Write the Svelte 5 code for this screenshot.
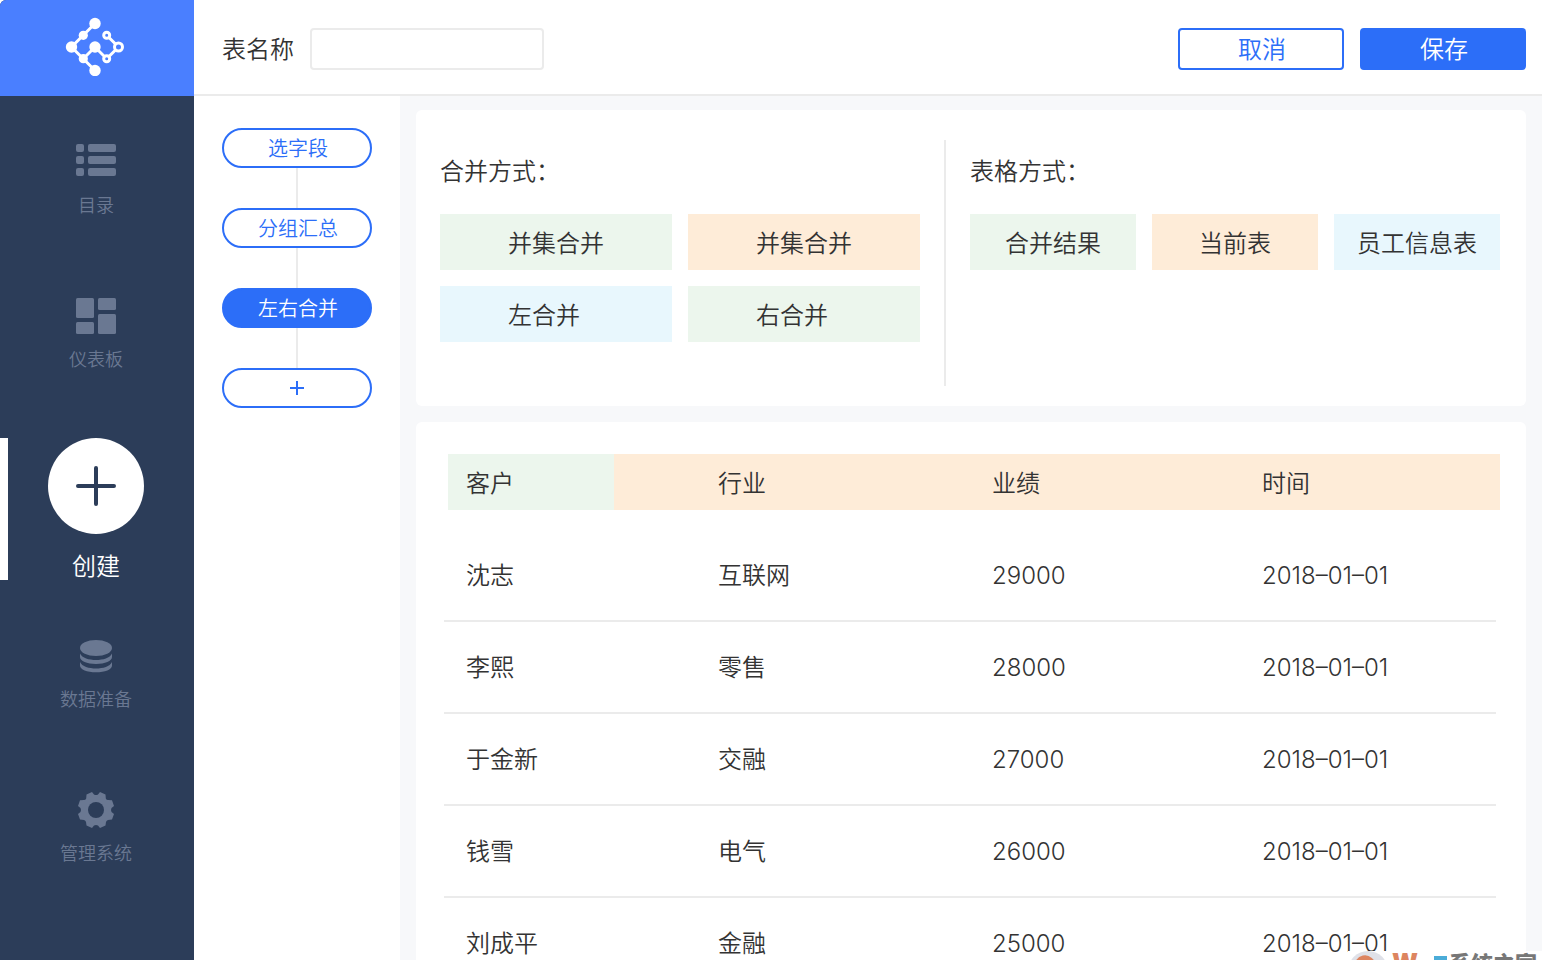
<script lang="ts">
	type Tone = 'green' | 'orange' | 'blue';

	let tableName = $state('');
	let steps = $state(['选字段', '分组汇总', '左右合并']);
	let activeStep = $state(2);

	const mergeModes: { label: string; tone: Tone }[] = [
		{ label: '并集合并', tone: 'green' },
		{ label: '并集合并', tone: 'orange' },
		{ label: '左合并', tone: 'blue' },
		{ label: '右合并', tone: 'green' }
	];

	const tableModes: { label: string; tone: Tone }[] = [
		{ label: '合并结果', tone: 'green' },
		{ label: '当前表', tone: 'orange' },
		{ label: '员工信息表', tone: 'blue' }
	];

	const rows = [
		{ customer: '沈志', industry: '互联网', amount: 29000, date: '2018–01–01' },
		{ customer: '李熙', industry: '零售', amount: 28000, date: '2018–01–01' },
		{ customer: '于金新', industry: '交融', amount: 27000, date: '2018–01–01' },
		{ customer: '钱雪', industry: '电气', amount: 26000, date: '2018–01–01' },
		{ customer: '刘成平', industry: '金融', amount: 25000, date: '2018–01–01' }
	];

	function addStep() {
		steps.push('选字段');
		activeStep = steps.length - 1;
	}
</script>

<div class="shell">
	<aside class="sidebar">
		<a class="logo" href="#home" aria-label="首页">
			<svg width="60" height="60" viewBox="0 0 60 60" fill="none" stroke="#fff" stroke-width="3">
				<path d="M31 7.500 7.500 31 31 54.500M19.300 42.700 31 31 42.700 42.700 54.500 31 42.700 19.300" />
				<g fill="#fff" stroke="none">
					<circle cx="31" cy="7.500" r="5.700" />
					<circle cx="19.300" cy="19.300" r="4.600" />
					<circle cx="7.500" cy="31" r="5.700" />
					<circle cx="31" cy="31" r="5.700" />
					<circle cx="19.300" cy="42.700" r="4.600" />
					<circle cx="31" cy="54.500" r="5.700" />
				</g>
				<g fill="#4a7fff">
					<circle cx="42.700" cy="19.300" r="3" />
					<circle cx="42.700" cy="42.700" r="3" />
					<circle cx="54.500" cy="31" r="4" />
				</g>
			</svg>
		</a>
		<nav>
			<a class="item" href="#catalog">
				<svg width="40" height="36" viewBox="0 0 40 36" fill="currentColor">
					<rect width="8" height="8" rx="2" />
					<rect x="12" width="28" height="8" rx="2" />
					<rect y="12" width="8" height="8" rx="2" />
					<rect x="12" y="12" width="28" height="8" rx="2" />
					<rect y="24" width="8" height="8" rx="2" />
					<rect x="12" y="24" width="28" height="8" rx="2" />
				</svg>
				<span>目录</span>
			</a>
			<a class="item" href="#dashboard">
				<svg width="40" height="36" viewBox="0 0 40 36" fill="currentColor">
					<rect width="18" height="20" rx="1.500" />
					<rect x="22" width="18" height="12" rx="1.500" />
					<rect y="24" width="18" height="12" rx="1.500" />
					<rect x="22" y="16" width="18" height="20" rx="1.500" />
				</svg>
				<span>仪表板</span>
			</a>
			<a class="create" href="#create">
				<svg width="96" height="96" viewBox="0 0 96 96">
					<circle cx="48" cy="48" r="48" fill="#fff" />
					<path d="M48 30v36M30 48h36" stroke="#2c3d59" stroke-width="4" stroke-linecap="round" />
				</svg>
				<span>创建</span>
			</a>
			<a class="item" href="#data">
				<svg width="40" height="36" viewBox="0 0 40 36" fill="currentColor">
					<ellipse cx="20" cy="10" rx="16" ry="8" />
					<path d="M4 15.500c2 4.500 9 6.500 16 6.500s14-2 16-6.500v3.500c0 4-7 7-16 7s-16-3-16-7z" />
					<path d="M4 24c2 4.500 9 6.500 16 6.500s14-2 16-6.500v3.500c0 4-7 6.800-16 6.800s-16-2.800-16-6.800z" />
				</svg>
				<span>数据准备</span>
			</a>
			<a class="item" href="#system">
				<svg width="40" height="36" viewBox="0 0 40 36">
					<path
						d="M10.500 2.500 16 0l2 2.500q2 1 4 0L24 0l5.500 2.500.300 4q.700 1.500 2.200 1.500l4 .300L38 14l-2.500 2q-1 2 0 4l2.500 2-2 5.500-4 .500q-1.500.300-2 2l-.500 3.500L24 36l-2-2.500q-2-1-4 0L16 36l-5.500-2.500-.500-3.500q-.500-1.700-2-2l-4-.500L2 22l2.500-2q1-2 0-4L2 14l2-5.700L8 8q1.500 0 2.200-1.500z"
						fill="currentColor"
					/>
					<circle cx="20" cy="18" r="8" fill="#2c3d59" />
				</svg>
				<span>管理系统</span>
			</a>
		</nav>
	</aside>

	<div class="main">
		<header class="topbar">
			<label for="table-name">表名称</label>
			<input id="table-name" type="text" bind:value={tableName} />
			<div class="actions">
				<button class="btn">取消</button>
				<button class="btn primary">保存</button>
			</div>
		</header>

		<div class="body">
			<div class="steps">
				{#each steps as step, i}
					<button class="step" class:active={i === activeStep} onclick={() => (activeStep = i)}>
						{step}
					</button>
					<span class="link"></span>
				{/each}
				<button class="step add" onclick={addStep} aria-label="添加步骤">
					<svg width="14" height="14" viewBox="0 0 14 14" stroke="currentColor" stroke-width="2">
						<path d="M7 0v14M0 7h14" />
					</svg>
				</button>
			</div>

			<main class="content">
				<section class="card modes">
					<div class="merge">
						<h2>合并方式：</h2>
						<div class="tiles">
							{#each mergeModes as mode}
								<button class="tile {mode.tone}">{mode.label}</button>
							{/each}
						</div>
					</div>
					<div class="divider"></div>
					<div class="table-mode">
						<h2>表格方式：</h2>
						<div class="tiles">
							{#each tableModes as mode}
								<button class="tile {mode.tone}">{mode.label}</button>
							{/each}
						</div>
					</div>
				</section>

				<section class="card result">
					<table>
						<thead>
							<tr>
								<th class="col-customer">客户</th>
								<th class="col-industry">行业</th>
								<th class="col-amount">业绩</th>
								<th class="col-date">时间</th>
							</tr>
						</thead>
						<tbody>
							{#each rows as row}
								<tr>
									<td class="col-customer">{row.customer}</td>
									<td class="col-industry">{row.industry}</td>
									<td>{row.amount}</td>
									<td>{row.date}</td>
								</tr>
							{/each}
						</tbody>
					</table>
				</section>
			</main>
		</div>
	</div>

	<div class="watermark">
		<svg width="40" height="40" viewBox="0 0 40 40">
			<circle cx="20" cy="20" r="20" fill="#dfe1e8" />
			<path d="M8 20a9 11 0 0 1 18-4" fill="none" stroke="#dd8560" stroke-width="5" />
		</svg>
		<span class="mark-w">W</span>
		<span class="mark-block"></span>
		<span class="mark-name">系统之家</span>
	</div>
</div>

<style>
	:global(body) {
		background: #fff;
	}

	.shell {
		position: relative;
		display: flex;
		height: 100vh;
		overflow: hidden;
		font-family: Inter, 'Noto Sans CJK SC', sans-serif;
		font-size: 24px;
		font-weight: 350;
		line-height: 34px;
		color: #333;
	}

	a {
		color: inherit;
		text-decoration: none;
	}

	button,
	input {
		font: inherit;
		color: inherit;
		box-sizing: border-box;
	}

	button {
		padding: 0;
		border: none;
		cursor: pointer;
	}

	.sidebar {
		flex: 0 0 194px;
		background: #2c3d59;
		border-top-left-radius: 6px;
		overflow: hidden;
	}

	.logo {
		display: flex;
		align-items: center;
		justify-content: center;
		box-sizing: border-box;
		height: 96px;
		padding: 0 6px 4px 0;
		background: #4a7fff;
	}

	nav {
		display: flex;
		flex-direction: column;
		gap: 58px;
		padding-top: 48px;
	}

	.item,
	.create {
		display: flex;
		flex-direction: column;
		align-items: center;
		padding-right: 2px;
	}

	.item {
		gap: 14px;
		font-size: 18px;
		line-height: 24px;
		color: #6a7892;
	}

	.item + .item {
		margin-top: 22px;
	}

	.create {
		gap: 20px;
		margin-top: 8px;
		padding-right: 10px;
		border-left: 8px solid #fff;
		line-height: 26px;
		color: #fff;
	}

	.main {
		flex: 1;
		min-width: 0;
		display: flex;
		flex-direction: column;
	}

	.topbar {
		display: flex;
		align-items: center;
		gap: 16px;
		padding: 28px 16px 24px 28px;
		border-bottom: 2px solid #ebebeb;
	}

	.topbar label {
		padding-top: 2px;
	}

	.topbar input {
		width: 234px;
		height: 42px;
		padding: 0 10px;
		border: 2px solid #ebebeb;
		border-radius: 4px;
		background: #fff;
	}

	.topbar input:focus {
		outline: none;
		border-color: #2c6ef8;
	}

	.actions {
		display: flex;
		gap: 16px;
		margin-left: auto;
	}

	.btn {
		width: 166px;
		height: 42px;
		padding: 2px 0 0 2px;
		border: 2px solid #2c6ef8;
		border-radius: 4px;
		background: #fff;
		color: #2c6ef8;
	}

	.btn.primary {
		background: #2c6ef8;
		color: #fff;
	}

	.body {
		flex: 1;
		min-height: 0;
		display: flex;
	}

	.steps {
		flex: 0 0 150px;
		display: flex;
		flex-direction: column;
		align-items: center;
		padding: 32px 28px;
	}

	.step {
		display: flex;
		align-items: center;
		justify-content: center;
		flex: none;
		width: 150px;
		height: 40px;
		padding: 2px 0 0 2px;
		border: 2px solid #2c6ef8;
		border-radius: 20px;
		background: #fff;
		color: #2c6ef8;
		font-size: 20px;
	}

	.step.active {
		background: #2c6ef8;
		color: #fff;
	}

	.step.add {
		padding: 0;
	}

	.link {
		flex: none;
		width: 2px;
		height: 40px;
		background: #ebebeb;
	}

	.content {
		flex: 1;
		min-width: 0;
		display: flex;
		flex-direction: column;
		gap: 16px;
		padding: 14px 16px;
		background: #f7f8fa;
	}

	.card {
		flex: none;
		border-radius: 6px;
		background: #fff;
	}

	.modes {
		display: grid;
		grid-template-columns: 480fr 2px 530fr;
		gap: 24px;
		padding: 30px 26px 20px 24px;
	}

	.divider {
		background: #ebebeb;
	}

	h2 {
		margin: 0;
		padding: 15px 0 25px;
		font-size: 24px;
		font-weight: 350;
	}

	.tiles {
		display: grid;
		gap: 16px;
	}

	.merge .tiles {
		grid-template-columns: repeat(2, 1fr);
		padding-bottom: 44px;
	}

	.table-mode .tiles {
		grid-template-columns: repeat(3, 1fr);
	}

	.tile {
		height: 56px;
		padding-top: 4px;
		text-align: center;
	}

	.merge .tile {
		padding-left: 68px;
		text-align: left;
	}

	.green {
		background: #ecf6ed;
	}

	.orange {
		background: #feecd8;
	}

	.blue {
		background: #e8f7fd;
	}

	.result {
		padding: 32px 26px 32px 28px;
	}

	table {
		width: 100%;
		table-layout: fixed;
		border-collapse: collapse;
	}

	th,
	td {
		padding: 0;
		font-weight: 350;
		text-align: left;
	}

	th {
		height: 52px;
		padding-top: 4px;
		background: #feecd8;
	}

	/* the header band starts 4px inside the row lines */
	th.col-customer {
		background: linear-gradient(to right, #fff 4px, #ecf6ed 4px);
	}

	td {
		height: 92px;
	}

	tbody tr {
		background: linear-gradient(#ebebeb, #ebebeb) left bottom / calc(100% - 4px) 2px no-repeat;
	}

	tbody tr:first-child td {
		padding-top: 20px;
	}

	.col-customer {
		width: 148px;
		padding-left: 22px;
	}

	.col-industry {
		width: 274px;
		padding-left: 104px;
	}

	.col-amount {
		width: 270px;
	}

	.col-date {
		width: 238px;
	}

	.watermark {
		position: absolute;
		right: 0;
		bottom: 0;
		display: flex;
		width: 194px;
		height: 9px;
		overflow: hidden;
		background: #fff;
		font-weight: 900;
	}

	.watermark svg {
		flex: none;
	}

	.mark-w {
		width: 46px;
		padding-left: 4px;
		box-sizing: border-box;
		line-height: 24px;
		color: #dd8560;
	}

	.mark-block {
		width: 13px;
		height: 4px;
		margin: 5px 2px 0 0;
		background: #4bacd8;
	}

	.mark-name {
		font-size: 22px;
		line-height: 26px;
		color: #777;
		white-space: nowrap;
	}
</style>
